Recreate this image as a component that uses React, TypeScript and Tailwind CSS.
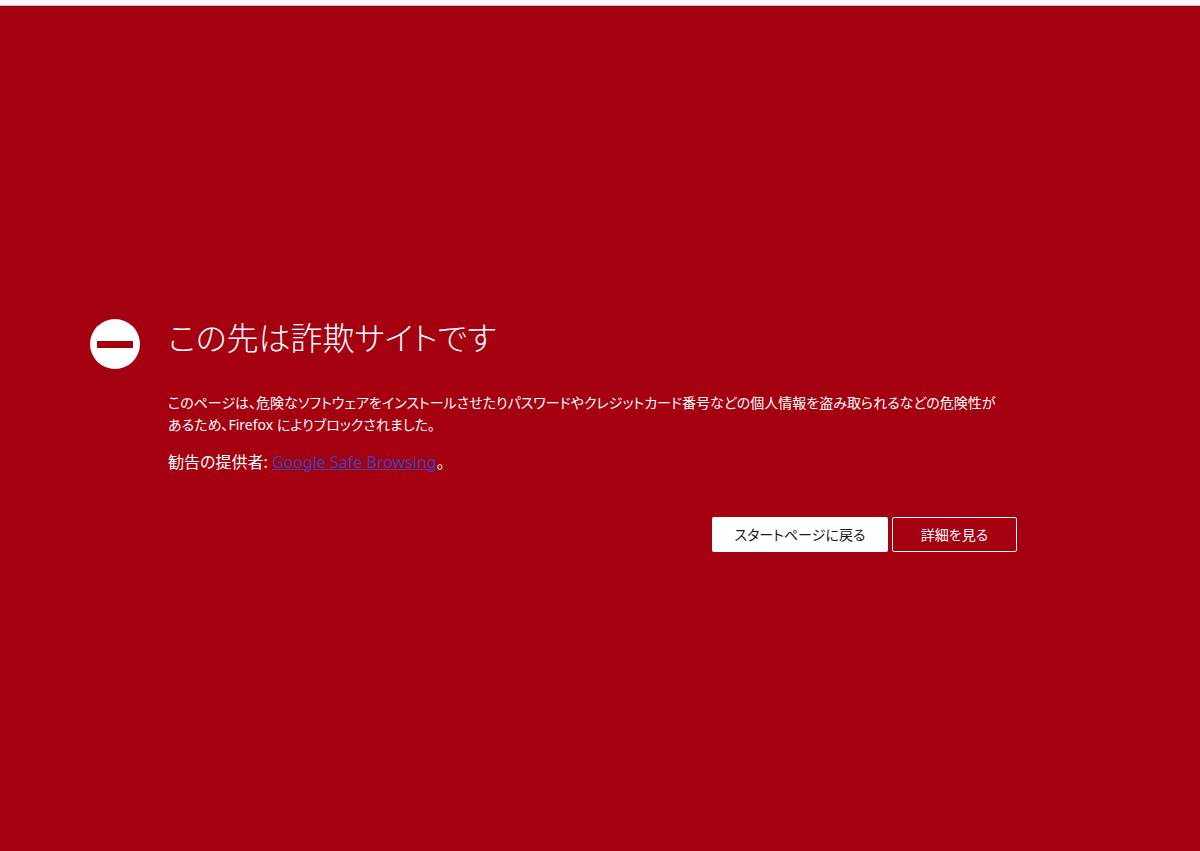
export default function App() {
  return (
    <div className="flex min-h-screen flex-col bg-[#a4000f] font-['Noto_Sans','Noto_Sans_CJK_JP',sans-serif] text-white">
      <div className="h-1.5 border-b border-[#d9b3b8] bg-[#fdf9fb]" />
      <main className="flex flex-1 items-center pt-2.5 pr-[183px] pl-[90px]">
        <div className="flex w-full gap-7">
          <svg viewBox="0 0 50 50" className="mt-[3px] size-[50px] shrink-0" aria-hidden="true">
            <circle cx="25" cy="25" r="25" fill="#fff" />
            <rect x="7" y="22" width="36" height="7" fill="#a4000f" />
          </svg>
          <div className="min-w-0 flex-1 [font-feature-settings:'palt']">
            <h1 className="text-[32px] leading-[44px] font-light">
              この先は詐欺サイトです
            </h1>
            <div className="mt-8 space-y-[15px] leading-[22px]">
              <p className="text-[14px] leading-[22px]">
                このページは、危険なソフトウェアをインストールさせたりパスワードやクレジットカード番号などの個人情報を盗み取られるなどの危険性が
                <br />
                あるため、Firefox によりブロックされました。
              </p>
              <p>
                勧告の提供者:{" "}
                <a href="https://safebrowsing.google.com/" className="text-[#463fb4] underline">
                  Google Safe Browsing
                </a>
                。
              </p>
            </div>
            <div className="mt-11 flex justify-end gap-1 text-[14px]">
              <button type="button" className="h-[35px] w-44 rounded-xs bg-white text-[#1a1a1a]">
                スタートページに戻る
              </button>
              <button type="button" className="h-[35px] w-[125px] rounded-xs border border-white">
                詳細を見る
              </button>
            </div>
          </div>
        </div>
      </main>
    </div>
  );
}
